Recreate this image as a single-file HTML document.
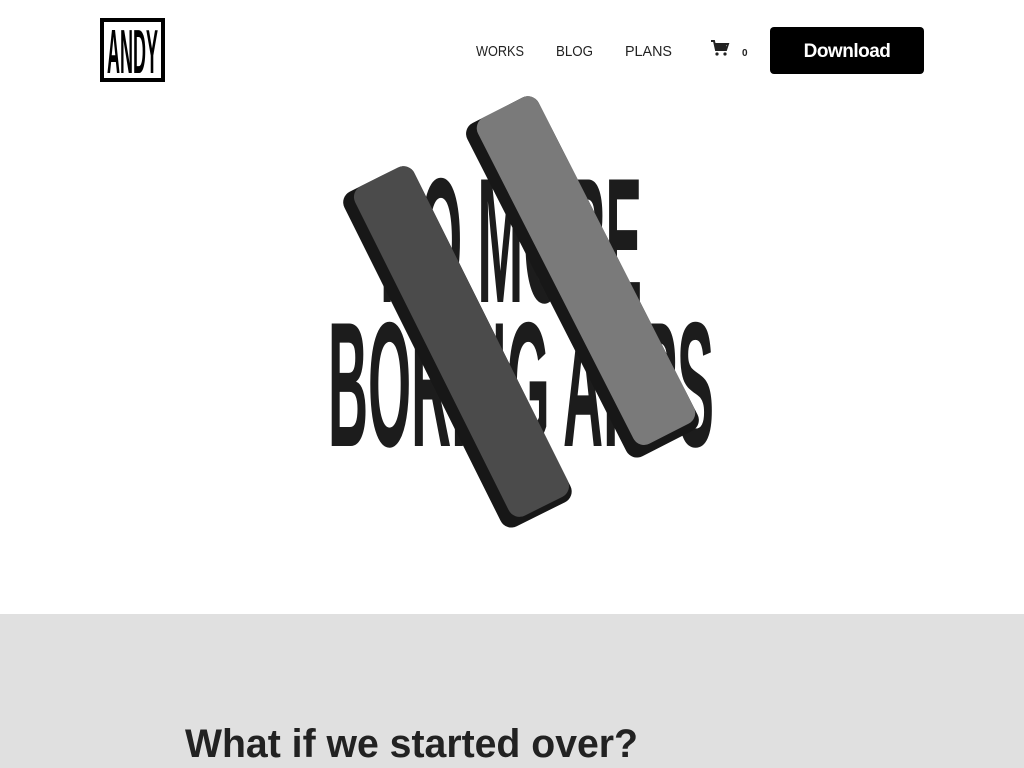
<!DOCTYPE html>
<html><head><meta charset="utf-8"><style>
html,body{margin:0;padding:0;width:1024px;height:768px;overflow:hidden;background:#fff;font-family:"Liberation Sans",sans-serif}
svg{display:block}
</style></head><body>
<svg width="1024" height="768" viewBox="0 0 1024 768" xmlns="http://www.w3.org/2000/svg">
<rect x="0" y="614" width="1024" height="154" fill="#e0e0e0"/>
<rect x="102" y="20" width="61" height="60" fill="none" stroke="#000" stroke-width="4"/>
<text x="107" y="73" font-family="Liberation Sans" font-weight="bold" font-size="62" textLength="51" lengthAdjust="spacingAndGlyphs" fill="#000">ANDY</text>
<g font-family="Liberation Sans" font-size="15" fill="#222">
<text x="476" y="56" textLength="48" lengthAdjust="spacingAndGlyphs">WORKS</text>
<text x="556" y="56" textLength="37" lengthAdjust="spacingAndGlyphs">BLOG</text>
<text x="625" y="56" textLength="47" lengthAdjust="spacingAndGlyphs">PLANS</text>
<text x="742" y="56" font-size="10" font-weight="bold">0</text>
</g>
<path d="M711 41h3l2 9h10l2-6h-13" fill="none" stroke="#222" stroke-width="2"/>
<rect x="716" y="44" width="10" height="6" fill="#222"/>
<circle cx="717" cy="54" r="1.6" fill="#222"/><circle cx="725" cy="54" r="1.6" fill="#222"/>
<rect x="770" y="27" width="154" height="47" rx="4" fill="#000"/>
<text x="847" y="57" text-anchor="middle" font-family="Liberation Sans" font-weight="bold" font-size="19" fill="#fff" letter-spacing="-0.5">Download</text>
<g font-family="Liberation Sans" font-weight="bold" font-size="178" fill="#1c1c1c">
<text x="380" y="302" textLength="262" lengthAdjust="spacingAndGlyphs">NO MORE</text>
<text x="328" y="446" textLength="386" lengthAdjust="spacingAndGlyphs">BORING APPS</text>
</g>
<!-- left phone -->
<g transform="rotate(-26.5 457 346)">
<rect x="418" y="160" width="78" height="374" rx="12" fill="#171717"/>
<rect x="430" y="160" width="66" height="368" rx="12" fill="#4b4b4b"/>
</g>
<!-- right phone -->
<g transform="rotate(-27 582 276)">
<rect x="542" y="90" width="80" height="374" rx="12" fill="#171717"/>
<rect x="554" y="90" width="68" height="366" rx="12" fill="#7a7a7a"/>
</g>
<text x="185" y="757" font-family="Liberation Sans" font-weight="bold" font-size="40" fill="#222" textLength="453" lengthAdjust="spacingAndGlyphs">What if we started over?</text>
</svg>
</body></html>
